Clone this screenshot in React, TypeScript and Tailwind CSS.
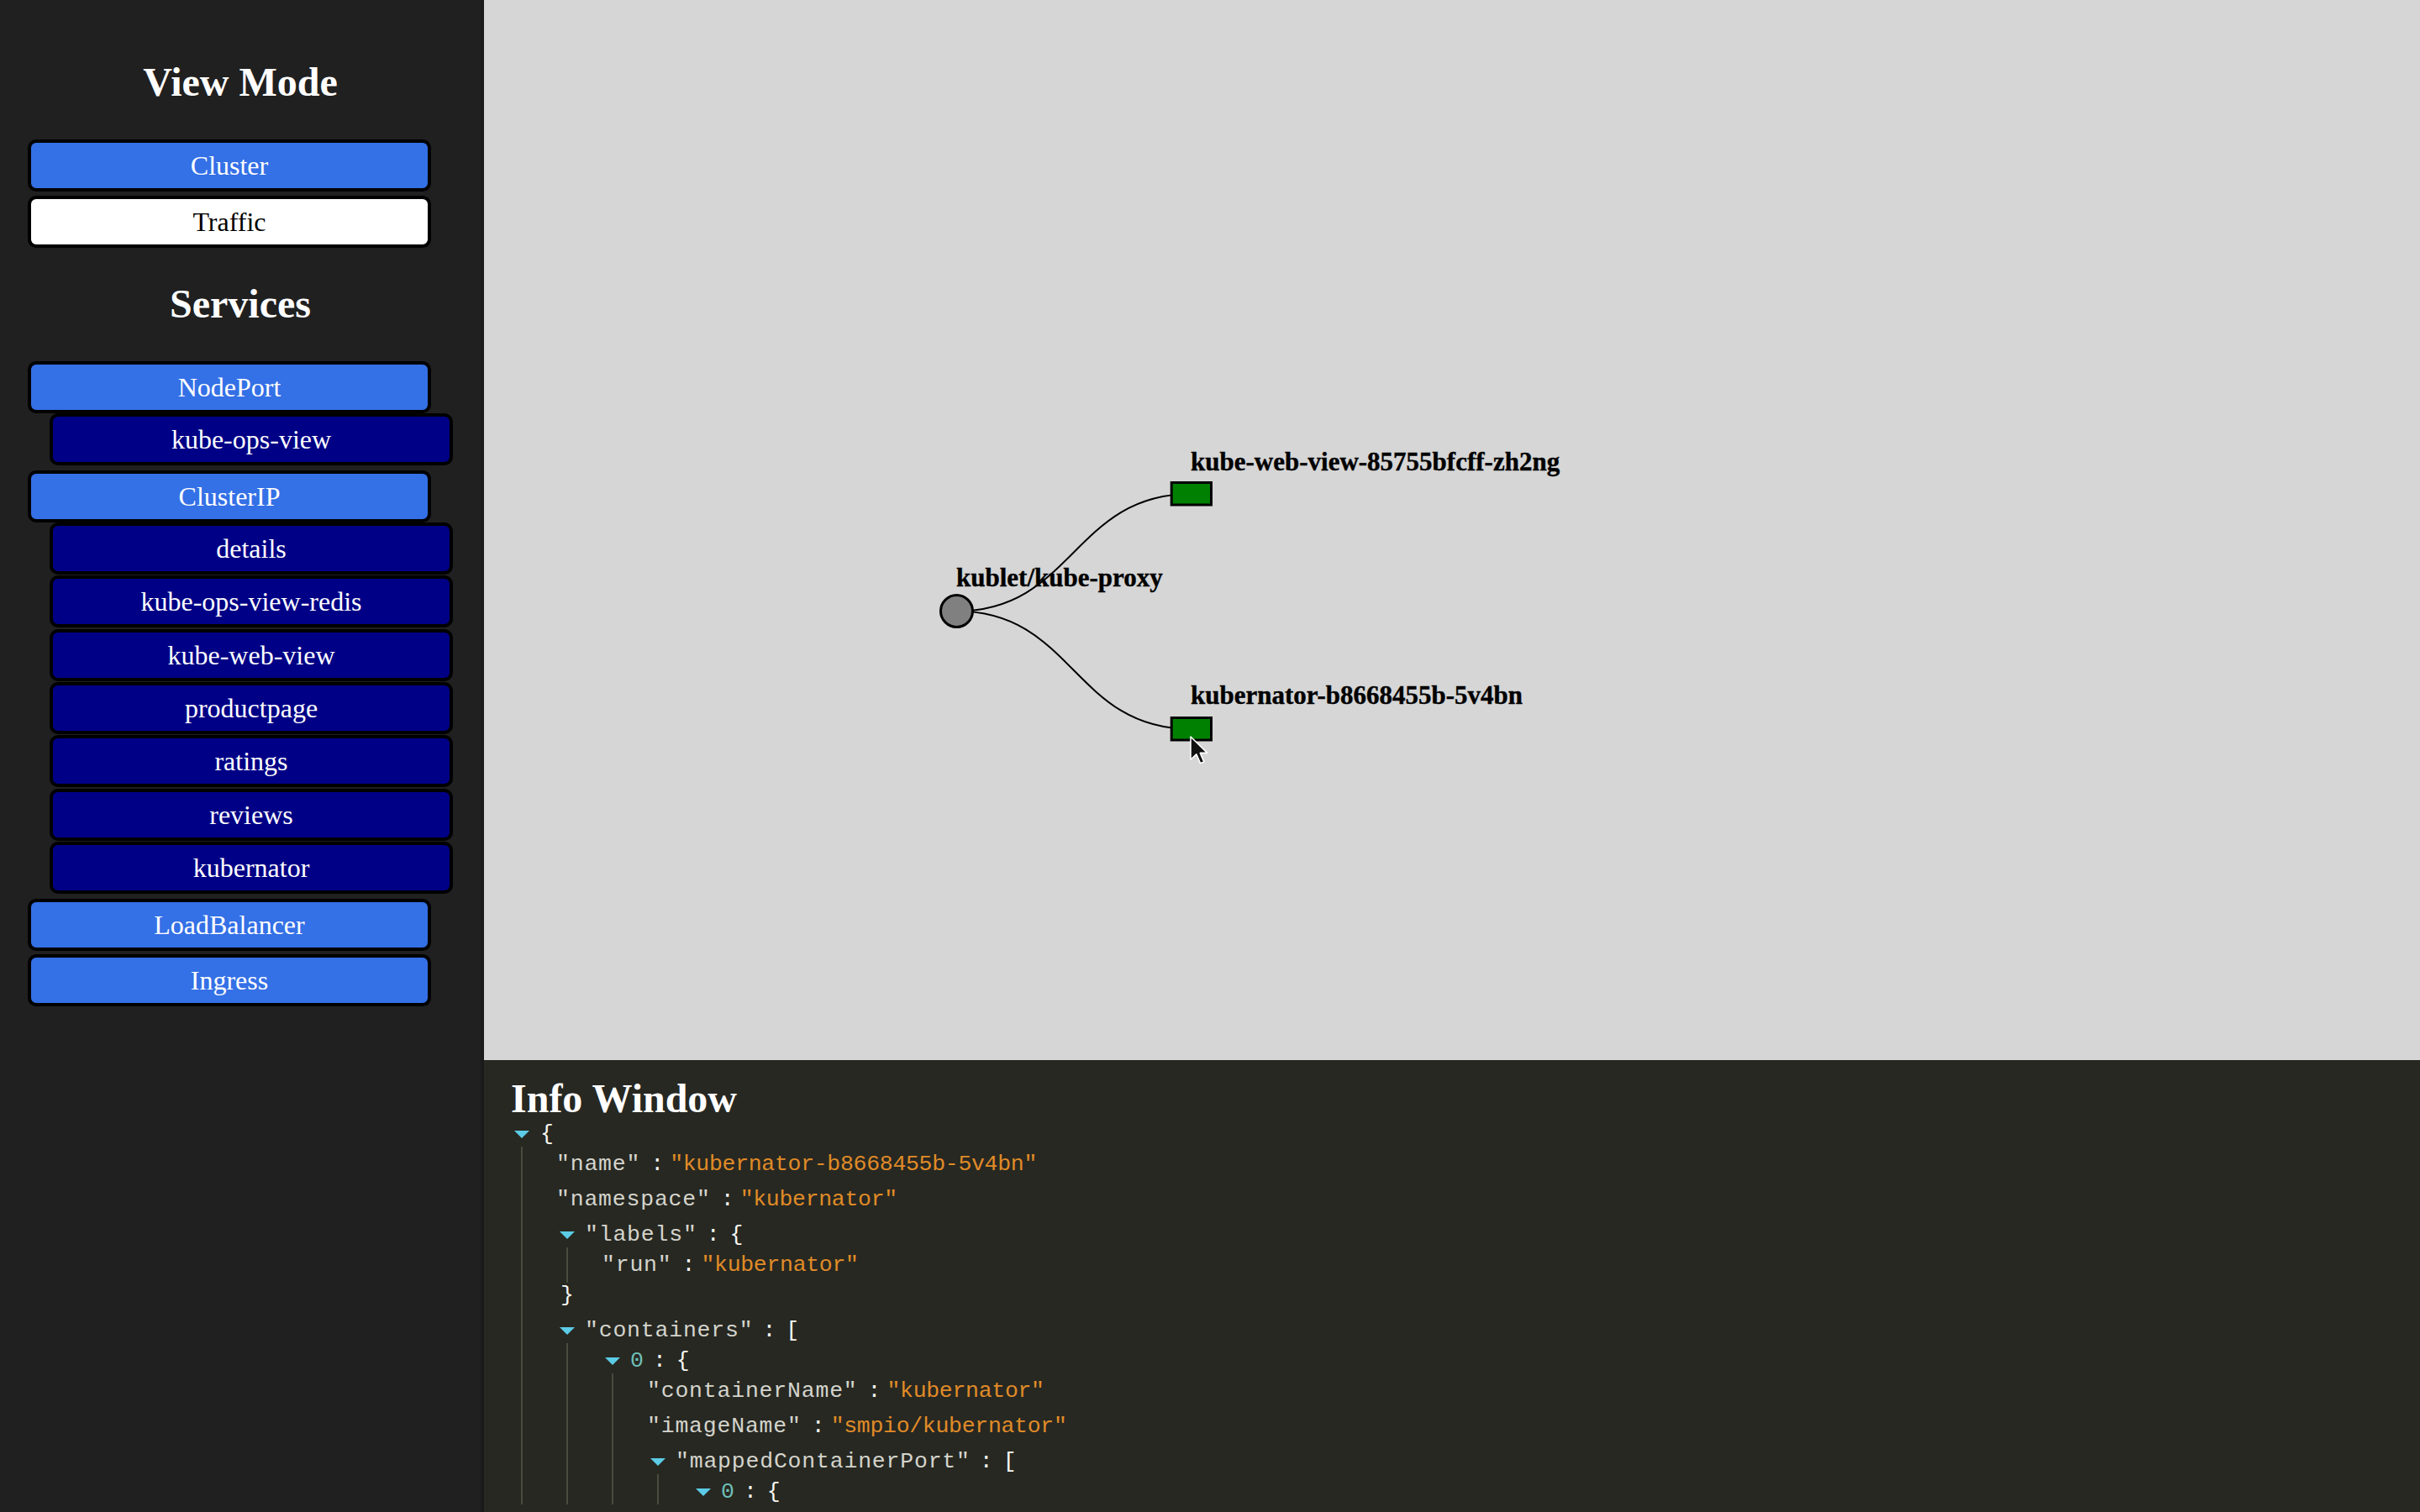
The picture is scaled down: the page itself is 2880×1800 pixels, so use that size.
import React from 'react';

type Leaf = { kind: 'leaf'; k: string; v: string };
type Branch = { kind: 'obj' | 'arr'; k?: string; idx?: number; items: Node[]; cut?: boolean };
type Node = Leaf | Branch;

// the tree runs past the bottom of the panel; "cut" branches have their closing line off-screen
const info: Branch = {
  kind: 'obj',
  cut: true,
  items: [
    { kind: 'leaf', k: 'name', v: 'kubernator-b8668455b-5v4bn' },
    { kind: 'leaf', k: 'namespace', v: 'kubernator' },
    { kind: 'obj', k: 'labels', items: [{ kind: 'leaf', k: 'run', v: 'kubernator' }] },
    {
      kind: 'arr',
      k: 'containers',
      cut: true,
      items: [
        {
          kind: 'obj',
          idx: 0,
          cut: true,
          items: [
            { kind: 'leaf', k: 'containerName', v: 'kubernator' },
            { kind: 'leaf', k: 'imageName', v: 'smpio/kubernator' },
            {
              kind: 'arr',
              k: 'mappedContainerPort',
              cut: true,
              items: [{ kind: 'obj', idx: 0, cut: true, items: [] }],
            },
          ],
        },
      ],
    },
  ],
};

const services = [
  { type: 'NodePort', items: ['kube-ops-view'] },
  {
    type: 'ClusterIP',
    items: ['details', 'kube-ops-view-redis', 'kube-web-view', 'productpage', 'ratings', 'reviews', 'kubernator'],
  },
  { type: 'LoadBalancer', items: [] as string[] },
  { type: 'Ingress', items: [] as string[] },
];

function Triangle() {
  return (
    <svg width="18" height="9" viewBox="0 0 18 9" className="flex-none">
      <polygon points="0,0 18,0 9,9" fill="#5ccbe6" />
    </svg>
  );
}

function Key({ k }: { k: string }) {
  return <span className="text-[#d4d4cc] tracking-[0.8px]">"{k}"</span>;
}

function JsonBranch({ node, root }: { node: Branch; root?: boolean }) {
  const open = node.kind === 'obj' ? '{' : '[';
  const close = node.kind === 'obj' ? '}' : ']';
  return (
    <div className={root ? 'mt-[2px] ml-[4px]' : 'pt-[6px] pb-[6px]'}>
      <div className="flex items-center h-[30px] whitespace-pre">
        <Triangle />
        {root ? (
          <span className="ml-[13px] text-[#f8f8f2]">{open}</span>
        ) : (
          <>
            <span className="ml-[12px]">
              {node.k !== undefined ? <Key k={node.k} /> : <span className="text-[#6fbfb7]">{node.idx}</span>}
            </span>
            <span className="ml-[11px] text-[#f8f8f2]">:</span>
            <span className="ml-[12px] text-[#f8f8f2]">{open}</span>
          </>
        )}
      </div>
      {node.items.length > 0 && (
        <div className="ml-[8px] border-l-2 border-[#4a4a3e] pl-[44px]">
          {node.items.map((child, i) =>
            child.kind === 'leaf' ? (
              <div key={i} className="-ml-[4px] h-[42px] flex items-center whitespace-pre">
                <Key k={child.k} />
                <span className="ml-[12px] text-[#f8f8f2]">:</span>
                <span className="ml-[7px] text-[#e08b27] tracking-[-0.3px]">"{child.v}"</span>
              </div>
            ) : (
              <JsonBranch key={i} node={child} />
            )
          )}
        </div>
      )}
      {!node.cut && <div className="h-[30px] flex items-center pl-[1px] text-[#f8f8f2]">{close}</div>}
    </div>
  );
}

function SideButton({ label, active, child }: { label: string; active?: boolean; child?: boolean }) {
  const color = child
    ? 'bg-[#000086] text-white'
    : active === false
    ? 'bg-white text-black'
    : 'bg-[#3470e6] text-white';
  return (
    <div
      className={`${child ? 'ml-[59px]' : 'ml-[33px]'} w-[480px] h-[62px] border-4 border-black rounded-[10px] flex items-center justify-center text-[32px] ${color}`}
    >
      {label}
    </div>
  );
}

function Graph() {
  const font = '"Liberation Serif", "Times New Roman", serif';
  return (
    <svg width="2304" height="1262" viewBox="0 0 2304 1262" className="block">
      <path d="M562.5,727.5 C701.5,727.5 701.5,588 841.5,588" fill="none" stroke="#000" strokeWidth="2" />
      <path d="M562.5,727.5 C701.5,727.5 701.5,868 841.5,868" fill="none" stroke="#000" strokeWidth="2" />
      <circle cx="562.5" cy="727.5" r="19" fill="#808080" stroke="#000" strokeWidth="3" />
      <rect x="818.2" y="574.5" width="47.3" height="26.5" fill="#008000" stroke="#000" strokeWidth="3" />
      <rect x="818.2" y="854.5" width="47.3" height="26.5" fill="#008000" stroke="#000" strokeWidth="3" />
      <g fontFamily={font} fontSize="31" fontWeight="bold" fill="#000" stroke="#000" strokeWidth="0.4">
        <text x="562" y="698">kublet/kube-proxy</text>
        <text x="841" y="560">kube-web-view-85755bfcff-zh2ng</text>
        <text x="841" y="838">kubernator-b8668455b-5v4bn</text>
      </g>
      {/* mouse pointer */}
      <g transform="translate(841,877) scale(1.7)">
        <polygon
          points="0,0 0,16 4,12.3 6.8,18.6 9.3,17.6 6.6,11.4 11.6,11.4"
          fill="#111"
          stroke="#fff"
          strokeWidth="0.9"
          strokeLinejoin="round"
        />
      </g>
    </svg>
  );
}

export default function App() {
  return (
    <div className="w-[2880px] h-[1800px] flex overflow-hidden font-['Liberation_Serif','Times_New_Roman',serif]">
      <aside className="w-[576px] shrink-0 h-full bg-[#202020] border-r-4 border-[#1a1a1a] pt-[70px]">
        <h2 className="text-center text-white text-[48px] font-bold leading-[56px] mb-[40px]">View Mode</h2>
        <SideButton label="Cluster" />
        <div className="mt-[5px]">
          <SideButton label="Traffic" active={false} />
        </div>
        <h2 className="text-center text-white text-[48px] font-bold leading-[56px] mt-[39px] mb-[40px]">Services</h2>
        {services.map((s, i) => (
          <div key={s.type} className={i === 0 ? '' : s.type === 'Ingress' ? 'mt-[4px]' : 'mt-[6px]'}>
            <SideButton label={s.type} />
            {s.items.length > 0 && (
              <div className="flex flex-col gap-[1.33px]">
                {s.items.map((name) => (
                  <SideButton key={name} label={name} child />
                ))}
              </div>
            )}
          </div>
        ))}
      </aside>
      <main className="flex-1 flex flex-col h-full min-w-0">
        <div className="h-[1262px] shrink-0 bg-[#d6d6d6] overflow-hidden">
          <Graph />
        </div>
        <section className="flex-1 min-h-0 bg-[#272822] pl-[32px] pt-[21px] pb-[9px] flex flex-col">
          <h2 className="text-white text-[48px] font-bold leading-[50px]">Info Window</h2>
          <div className="flex-1 min-h-0 overflow-hidden font-['Liberation_Mono','Courier_New',monospace] text-[26.5px] leading-[30px]">
            <JsonBranch node={info} root />
          </div>
        </section>
      </main>
    </div>
  );
}
